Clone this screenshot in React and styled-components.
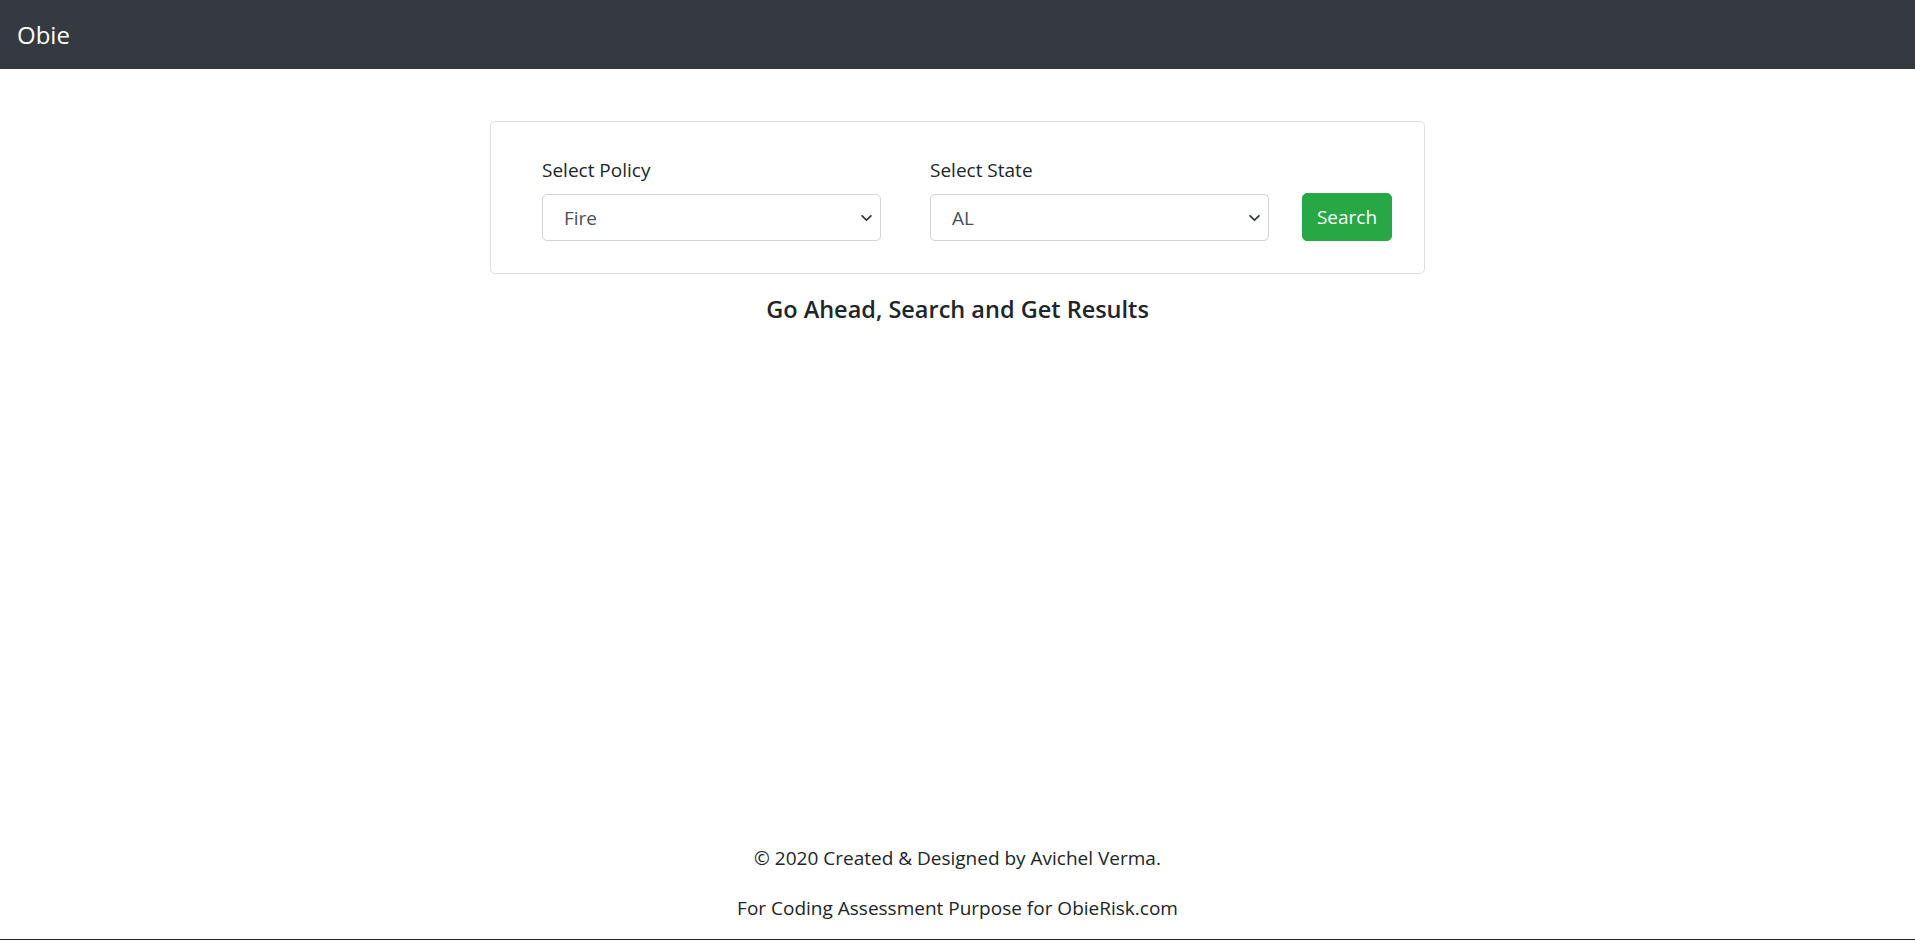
import React, { useState } from "react";
import styled, { createGlobalStyle } from "styled-components";

const GlobalStyle = createGlobalStyle`
  * {
    box-sizing: border-box;
  }
  body {
    margin: 0;
    font-family: "Open Sans", "Noto Sans", sans-serif;
    color: #212529;
    background: #fff;
  }
`;

const policies = ["Fire", "Flood", "Auto", "Home", "Life"];
const states = ["AL", "AK", "AZ", "AR", "CA", "CO", "CT", "DE", "FL", "GA"];

const Chevron = () => (
  <ChevronIcon viewBox="0 0 10 6" width="11" height="7">
    <path
      d="M1 1l4 4 4-4"
      fill="none"
      stroke="#343a40"
      strokeWidth="1.6"
      strokeLinecap="round"
      strokeLinejoin="round"
    />
  </ChevronIcon>
);

const SelectField = ({ label, options, value, onChange }) => (
  <Field>
    <Label>{label}</Label>
    <SelectWrap>
      <Select value={value} onChange={(e) => onChange(e.target.value)}>
        {options.map((o) => (
          <option key={o} value={o}>
            {o}
          </option>
        ))}
      </Select>
      <Chevron />
    </SelectWrap>
  </Field>
);

const App = () => {
  const [policy, setPolicy] = useState("Fire");
  const [state, setState] = useState("AL");

  return (
    <>
      <GlobalStyle />
      <Page>
        <Navbar>
          <Brand>Obie</Brand>
        </Navbar>
        <Main>
          <Card>
            <SelectField
              label="Select Policy"
              options={policies}
              value={policy}
              onChange={setPolicy}
            />
            <SelectField
              label="Select State"
              options={states}
              value={state}
              onChange={setState}
            />
            <SearchButton type="button">Search</SearchButton>
          </Card>
          <Heading>Go Ahead, Search and Get Results</Heading>
        </Main>
        <Footer>
          <FooterText>© 2020 Created &amp; Designed by Avichel Verma.</FooterText>
          <FooterText>For Coding Assessment Purpose for ObieRisk.com</FooterText>
        </Footer>
        <BottomRule />
      </Page>
    </>
  );
};

export default App;

const Page = styled.div`
  min-height: 100vh;
  display: flex;
  flex-direction: column;
  padding-bottom: 1px;
`;

const Navbar = styled.nav`
  height: 69px;
  background: #343a40;
  display: flex;
  align-items: center;
  padding: 0 17px;
`;

const Brand = styled.span`
  color: #fff;
  font-size: 24px;
  line-height: 1;
  cursor: pointer;
`;

const Main = styled.main`
  flex: 1;
  display: flex;
  flex-direction: column;
  align-items: center;
  padding-top: 52px;
`;

const Card = styled.div`
  width: 935px;
  border: 1px solid #e0e0e0;
  border-radius: 5px;
  display: flex;
  align-items: flex-end;
  padding: 33px 32px 32px 51px;
`;

const Field = styled.div`
  width: 339px;
  margin-right: 49px;
  display: flex;
  flex-direction: column;
  &:nth-of-type(2) {
    margin-right: 33px;
  }
`;

const Label = styled.label`
  font-size: 19px;
  line-height: 30px;
  margin-bottom: 9px;
  color: #212529;
`;

const SelectWrap = styled.div`
  position: relative;
`;

const Select = styled.select`
  appearance: none;
  width: 100%;
  height: 47px;
  border: 1px solid #ced4da;
  border-radius: 5px;
  background: #fff;
  padding: 0 40px 0 21px;
  font-family: inherit;
  font-size: 19px;
  color: #495057;
  outline: none;
`;

const ChevronIcon = styled.svg`
  position: absolute;
  right: 9px;
  top: 50%;
  transform: translateY(-50%);
  pointer-events: none;
`;

const SearchButton = styled.button`
  width: 90px;
  height: 48px;
  background: #28a745;
  border: 1px solid #28a745;
  border-radius: 5px;
  color: #fff;
  font-family: inherit;
  font-size: 19px;
  cursor: pointer;
  padding: 0;
`;

const Heading = styled.h5`
  margin: 20px 0 0;
  font-size: 23.5px;
  font-weight: 600;
  line-height: 30px;
  color: #212529;
`;

const Footer = styled.footer`
  text-align: center;
  padding-bottom: 16px;
`;

const FooterText = styled.p`
  margin: 0;
  font-size: 19px;
  line-height: 30px;
  & + & {
    margin-top: 20px;
  }
`;

const BottomRule = styled.div`
  height: 1px;
  background: #3a1c14;
`;
